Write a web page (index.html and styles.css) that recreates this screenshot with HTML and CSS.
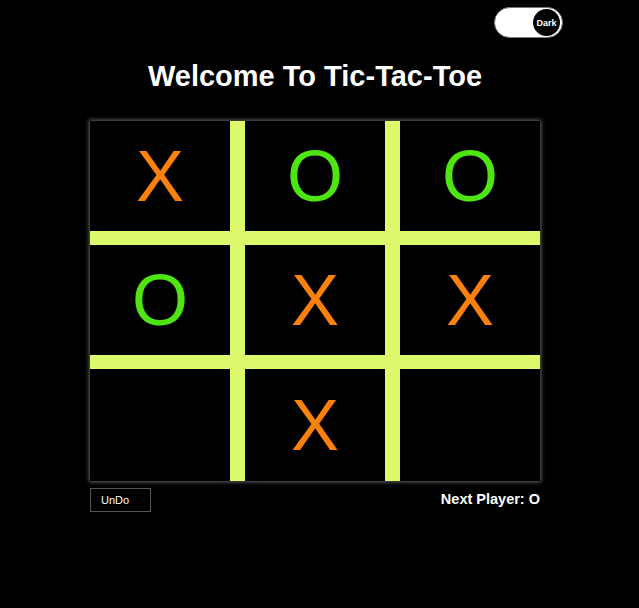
FILE: index.html
```html
<!DOCTYPE html>
<html>
<head>
<meta charset="utf-8">
<link rel="stylesheet" href="styles.css">
</head>
<body>
<div class="page">
  <div class="topbar">
    <div class="toggle"><span class="knob">Dark</span></div>
  </div>
  <h1 class="title">Welcome To Tic-Tac-Toe</h1>
  <div class="board">
    <div class="cell x">X</div>
    <div class="cell o">O</div>
    <div class="cell o">O</div>
    <div class="cell o">O</div>
    <div class="cell x">X</div>
    <div class="cell x">X</div>
    <div class="cell"></div>
    <div class="cell x">X</div>
    <div class="cell"></div>
  </div>
  <div class="footer">
    <button class="undo">UnDo</button>
    <div class="next">Next Player: O</div>
  </div>
</div>
</body>
</html>
```
FILE: styles.css
```css
html, body {
  margin: 0;
  padding: 0;
  background: #000;
  font-family: "Liberation Sans", Arial, sans-serif;
  color: #fff;
}
.page {
  width: 450px;
  margin-left: 90px;
  padding-top: 7px;
}
.topbar {
  display: flex;
  justify-content: flex-end;
  margin-right: -23px;
}
.toggle {
  width: 69px;
  height: 31px;
  box-sizing: border-box;
  background: #fff;
  border: 1px solid #777;
  border-radius: 16px;
  display: flex;
  align-items: center;
  justify-content: flex-end;
  padding-right: 2px;
}
.knob {
  width: 27px;
  height: 27px;
  border-radius: 50%;
  background: #000;
  color: #fff;
  font-size: 9px;
  font-weight: bold;
  display: flex;
  align-items: center;
  justify-content: center;
}
.title {
  margin: 22px 0 0 0;
  text-align: center;
  font-size: 29px;
  font-weight: bold;
  line-height: 32px;
}
.board {
  margin-top: 29px;
  display: grid;
  grid-template-columns: 140px 140px 140px;
  grid-template-rows: 110px 110px 112px;
  column-gap: 15px;
  row-gap: 14px;
  background: #dbf96b;
  box-shadow: 0 0 4px 1px #666;
}
.cell {
  background: #000;
  display: flex;
  align-items: center;
  justify-content: center;
  font-size: 72px;
  line-height: 1;
}
.x { color: #fc810c; }
.o { color: #4ee513; }
.footer {
  margin-top: 7px;
  display: flex;
  justify-content: space-between;
  align-items: flex-start;
}
.undo {
  width: 61px;
  height: 24px;
  background: #000;
  color: #fff;
  border: 1px solid #555;
  font-family: "Liberation Sans", Arial, sans-serif;
  font-size: 11px;
  text-align: left;
  padding: 0 0 0 10px;
  margin: 0;
}
.next {
  font-size: 14.5px;
  font-weight: bold;
  margin-top: 3px;
}
```
